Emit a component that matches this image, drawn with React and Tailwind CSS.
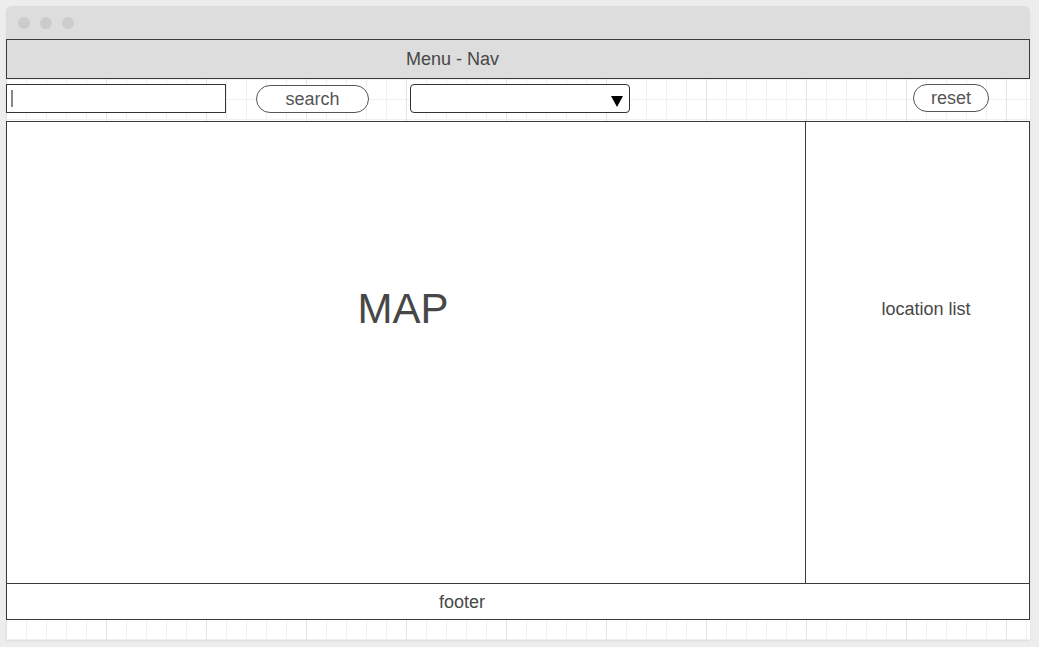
import React from "react";

function App() {
  return (
    <div className="min-h-screen bg-[#ededed] pt-[6px] pl-[6px] font-['Liberation_Sans',Arial,sans-serif] text-[#474747]">
      <div className="w-[1024px] h-[634px] flex flex-col rounded-t-[6px] overflow-hidden shadow-[0_1px_2px_rgba(0,0,0,0.08)]">
        {/* Window chrome */}
        <div className="h-[33px] shrink-0 bg-[#dddddd] flex items-center gap-[10px] pl-[12px]">
          <span className="w-[12px] h-[12px] rounded-full bg-[#cccccc]" />
          <span className="w-[12px] h-[12px] rounded-full bg-[#cccccc]" />
          <span className="w-[12px] h-[12px] rounded-full bg-[#cccccc]" />
        </div>

        {/* Canvas with grid */}
        <div className="flex-1 flex flex-col bg-white bg-[linear-gradient(to_right,#e4e4e4_1px,transparent_1px),linear-gradient(to_right,#f0f0f0_1px,transparent_1px),linear-gradient(to_bottom,#f0f0f0_1px,transparent_1px)] bg-size-[100px_100px,20px_20px,20px_20px]">
          {/* Nav */}
          <div className="h-[40px] shrink-0 border border-[#3a3a3a] bg-[#dddddd] flex items-center pl-[399px] text-[18px]">
            Menu - Nav
          </div>

          {/* Toolbar */}
          <div className="h-[42px] shrink-0 flex items-start pt-[5px]">
            <div className="w-[220px] h-[29px] border border-[#333] bg-white flex items-center pl-[4px]">
              <span className="w-[2px] h-[17px] bg-[#888]" />
            </div>
            <button className="ml-[30px] mt-[1px] w-[113px] h-[28px] rounded-full border border-[#555] bg-white text-[18px] leading-none text-[#555] flex items-center justify-center pb-[1px]">
              search
            </button>
            <div className="ml-[41px] w-[220px] h-[29px] border border-[#333] rounded-[4px] bg-white flex items-center justify-end pr-[6px] pt-[6px]">
              <svg width="12" height="11" viewBox="0 0 12 11">
                <polygon points="0,0 12,0 6,11" fill="#000" />
              </svg>
            </div>
            <button className="ml-[283px] w-[76px] h-[28px] rounded-full border border-[#555] bg-white text-[18px] leading-none text-[#555] flex items-center justify-center">
              reset
            </button>
          </div>

          {/* Main */}
          <div className="h-[463px] shrink-0 border border-[#3a3a3a] bg-white flex">
            <div className="w-[799px] border-r border-[#3a3a3a] flex justify-center pt-[166px] pr-[6px]">
              <span className="text-[42px] leading-none">MAP</span>
            </div>
            <div className="flex-1 flex justify-center pt-[178px] pl-[17px]">
              <span className="text-[18px] leading-none">location list</span>
            </div>
          </div>

          {/* Footer */}
          <div className="h-[36px] shrink-0 border border-t-0 border-[#3a3a3a] bg-white flex items-center pl-[432px] pt-[1px] text-[18px]">
            footer
          </div>
        </div>
      </div>
    </div>
  );
}

export default App;
